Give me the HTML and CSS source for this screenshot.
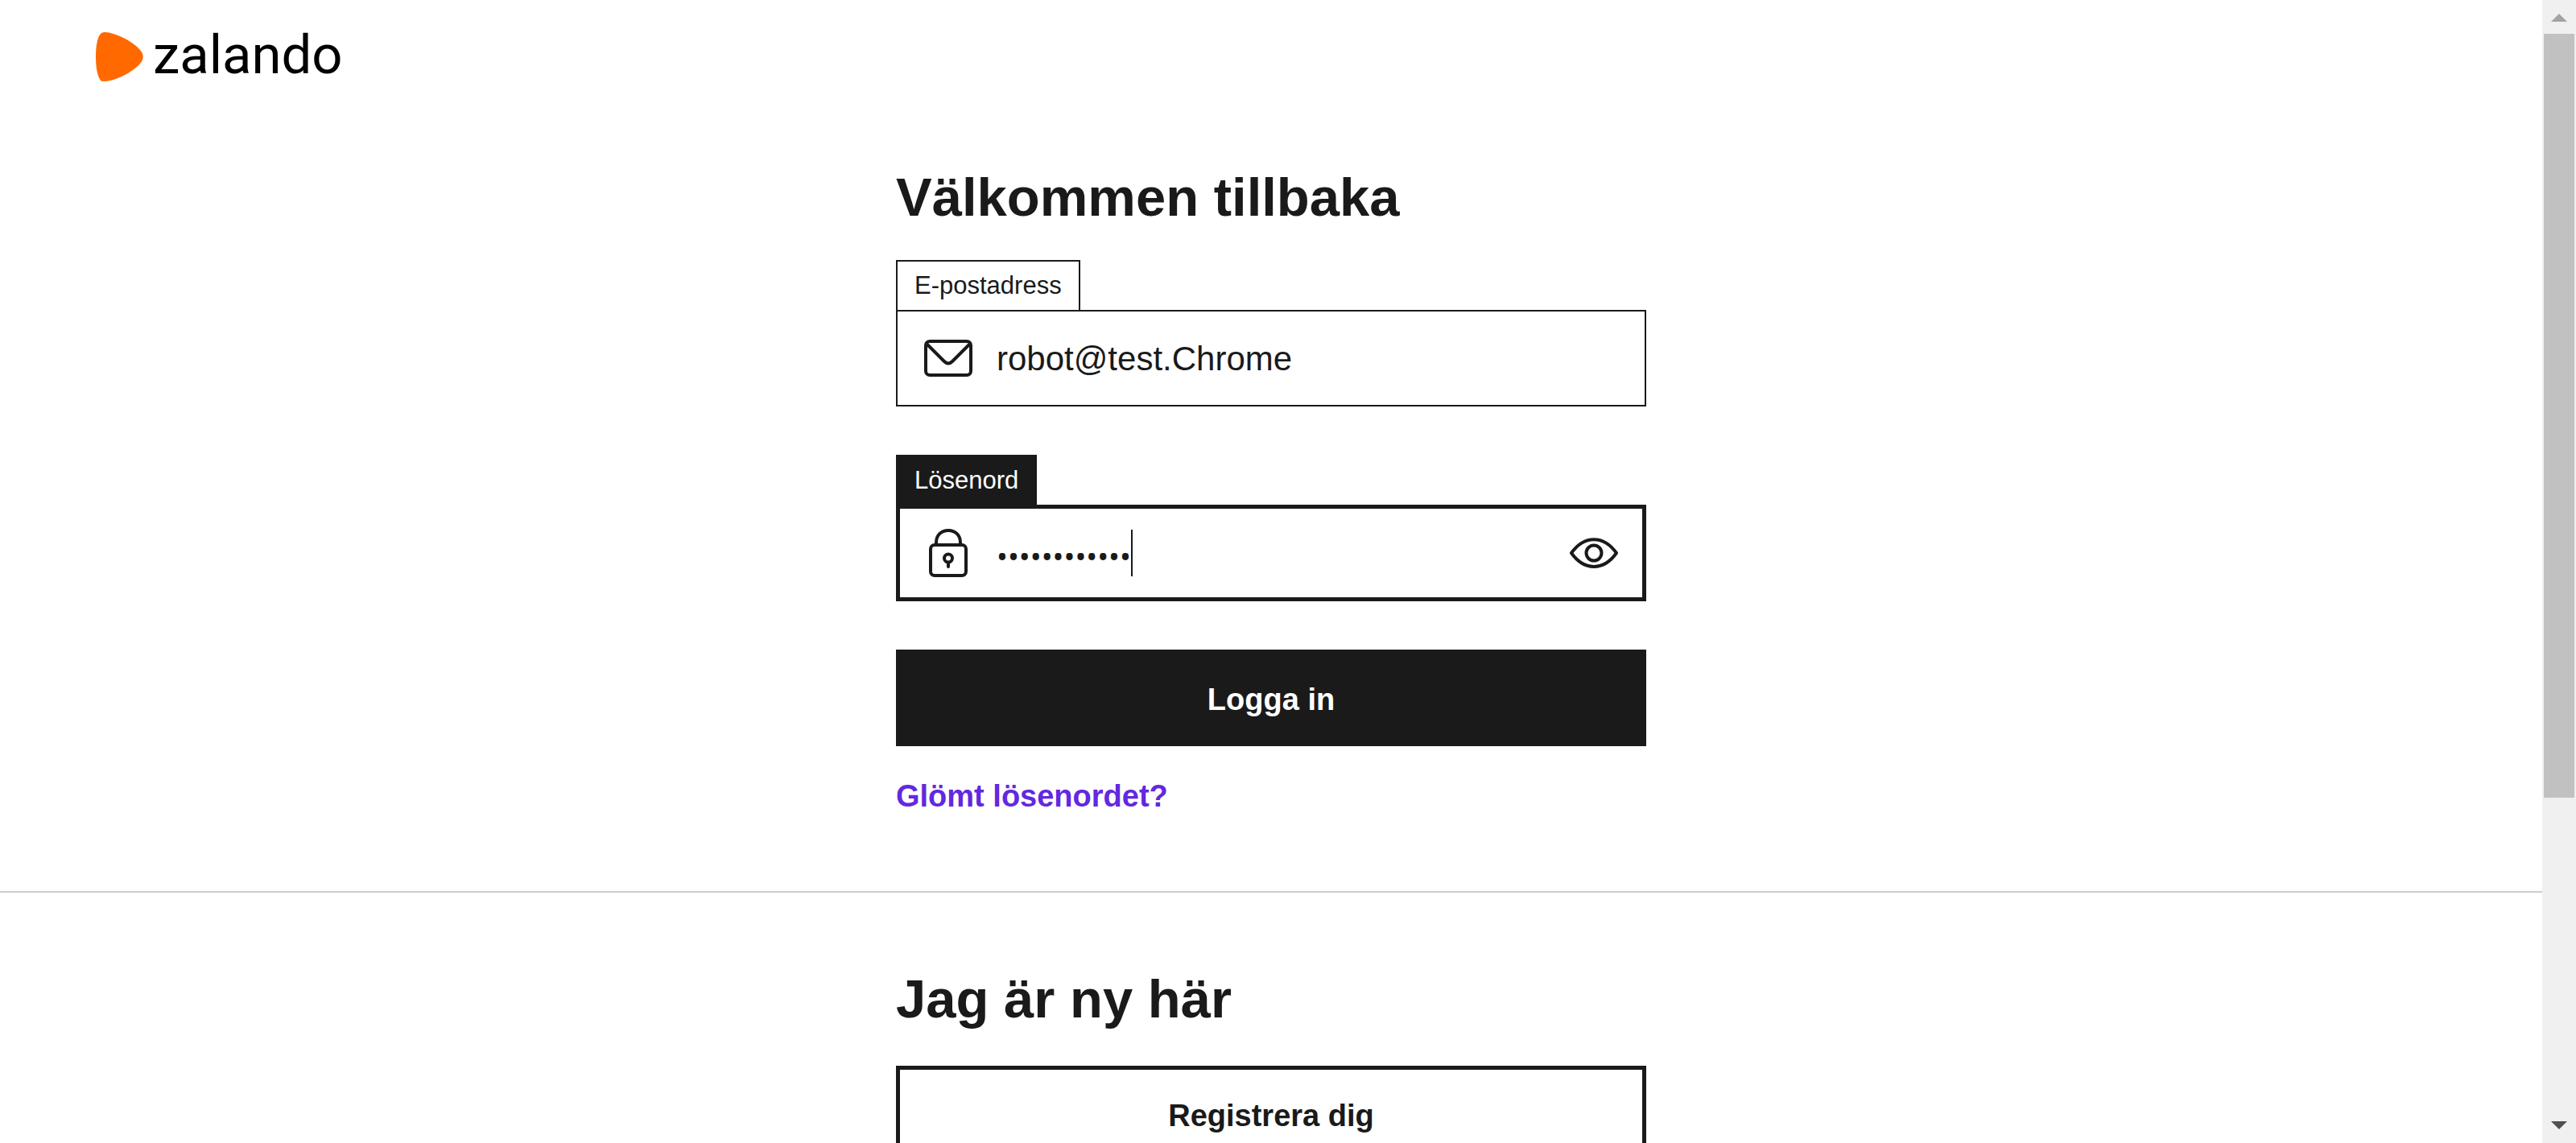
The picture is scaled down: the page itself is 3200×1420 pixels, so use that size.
FILE: index.html
```html
<!DOCTYPE html>
<html lang="sv">
<head>
<meta charset="utf-8">
<title>Logga in | Zalando</title>
<link rel="stylesheet" href="styles.css">
</head>
<body>
<div class="page">
  <header class="header">
    <a class="logo" href="#" aria-label="zalando">
      <svg class="logo-mark" viewBox="0 0 59 61" aria-hidden="true">
        <path fill="#ff6900" d="M6 60C2 55 0 44 0 30.500S2 6 6 2C9-1 15 0 22 2C35 6 48 14 55 22C60 28 60 33 55 39C48 47 35 55 22 59C15 61 9 62 6 60Z"/>
      </svg>
      <span class="logo-text">zalando</span>
    </a>
  </header>
  <main>
    <section class="login">
      <form class="column">
        <h1 class="title">Välkommen tillbaka</h1>
        <div class="field">
          <label class="tab" for="email">E-postadress</label>
          <div class="box">
            <svg class="icon" viewBox="0 0 60 60" aria-hidden="true">
              <rect x="2" y="9" width="56" height="42" rx="5"/>
              <path d="M3 12L25 34Q30 39 35 34L57 12"/>
            </svg>
            <input class="input" id="email" type="email" value="robot@test.Chrome">
          </div>
        </div>
        <div class="field active">
          <label class="tab" for="password">Lösenord</label>
          <div class="box">
            <svg class="icon" viewBox="0 0 60 60" aria-hidden="true">
              <rect x="8" y="20" width="44" height="38" rx="5"/>
              <path d="M15 20V17C15 8 21 2 30 2S45 8 45 17V20M30 42V47"/>
              <circle cx="30" cy="36.500" r="5"/>
            </svg>
            <input class="input secret" id="password" type="password" value="robottest123">
            <span class="caret"></span>
            <button class="reveal" type="button" aria-label="Visa lösenord">
              <svg class="icon" viewBox="0 0 60 60" aria-hidden="true">
                <path d="M2 30C18 7.500 42 7.500 58 30C42 52.500 18 52.500 2 30Z"/>
                <circle cx="30" cy="30" r="9.500"/>
              </svg>
            </button>
          </div>
        </div>
        <button class="button primary" type="submit">Logga in</button>
        <a class="forgot" href="#">Glömt lösenordet?</a>
      </form>
    </section>
    <section class="register">
      <div class="column">
        <h2 class="title">Jag är ny här</h2>
        <button class="button" type="button">Registrera dig</button>
      </div>
    </section>
  </main>
</div>
<div class="scrollbar" aria-hidden="true">
  <svg class="arrow" viewBox="0 0 42 42"><path fill="#a3a3a3" d="M11 27L21 17L31 27Z"/></svg>
  <div class="track"><div class="thumb"></div></div>
  <svg class="arrow" viewBox="0 0 42 42"><path fill="#505050" d="M11 15H31L21 25Z"/></svg>
</div>
</body>
</html>
```
FILE: styles.css
```css
* {
  box-sizing: border-box;
}

body {
  display: flex;
  height: 100vh;
  margin: 0;
  overflow: hidden;
  background: #fff;
  color: #1a1a1a;
  font-family: "Liberation Sans", Arial, sans-serif;
}

.page {
  flex: 1;
  overflow: hidden;
}

.header {
  display: flex;
  padding: 30px 119px 0;
}

.logo {
  display: flex;
  align-items: center;
  gap: 12px;
  height: 80px;
  color: #000;
  text-decoration: none;
}

.logo-mark {
  width: 59px;
  height: 61px;
}

.logo-text {
  padding-bottom: 4px;
  font: 67px/76px Roboto, sans-serif;
}

.login {
  padding: 95px 0 96px;
  border-bottom: 2px solid #ccc;
}

.login .title {
  margin-bottom: 38px;
}

.register {
  padding: 92px 0;
}

.column {
  display: flex;
  flex-direction: column;
  align-items: flex-start;
  width: 100%;
  max-width: 932px;
  margin: 0 auto;
}

.title {
  margin: 0 0 43px;
  font-size: 67px;
  line-height: 80px;
}

.field {
  display: flex;
  flex-direction: column;
  align-items: flex-start;
  width: 100%;
  margin-bottom: 60px;
}

.tab {
  display: flex;
  align-items: center;
  height: 62px;
  padding: 0 21px;
  border: 2px solid #1a1a1a;
  border-bottom: 0;
  font-size: 31px;
}

.box {
  display: flex;
  align-items: center;
  width: 100%;
  height: 120px;
  padding: 0 33px;
  border: 2px solid #1a1a1a;
}

.active .tab {
  background: #1a1a1a;
  color: #fff;
}

.active .box {
  padding: 0 30px;
  border-width: 5px;
}

.icon {
  display: block;
  flex: none;
  width: 60px;
  height: 60px;
  fill: none;
  stroke: #1a1a1a;
  stroke-width: 4;
  stroke-linecap: round;
  stroke-linejoin: round;
}

.input {
  flex: 1;
  min-width: 0;
  margin-left: 30px;
  padding: 2px 0 0;
  border: 0;
  outline: 0;
  background: none;
  color: inherit;
  font: 42px/58px "Liberation Sans", Arial, sans-serif;
}

.secret {
  flex: none;
  field-sizing: content;
  padding-top: 8px;
  font: 37px/58px "Noto Sans", sans-serif;
}

.caret {
  width: 2px;
  height: 58px;
  background: #1a1a1a;
}

.reveal {
  margin-left: auto;
  padding: 0;
  border: 0;
  background: none;
}

.button {
  width: 100%;
  height: 120px;
  padding: 4px 0 0;
  border: 5px solid #1a1a1a;
  background: #fff;
  color: #1a1a1a;
  font: bold 38px "Liberation Sans", Arial, sans-serif;
}

.primary {
  background: #1a1a1a;
  color: #fff;
}

.forgot {
  margin-top: 40px;
  color: #6328e0;
  font-size: 38px;
  font-weight: bold;
  line-height: 44px;
  text-decoration: none;
}

.scrollbar {
  display: flex;
  flex-direction: column;
  width: 42px;
  background: #f0f0f0;
}

.arrow {
  flex: none;
  width: 42px;
  height: 42px;
}

.track {
  flex: 1;
  padding: 0 2px;
}

.thumb {
  height: 71%;
  background: #c1c1c1;
}
```
